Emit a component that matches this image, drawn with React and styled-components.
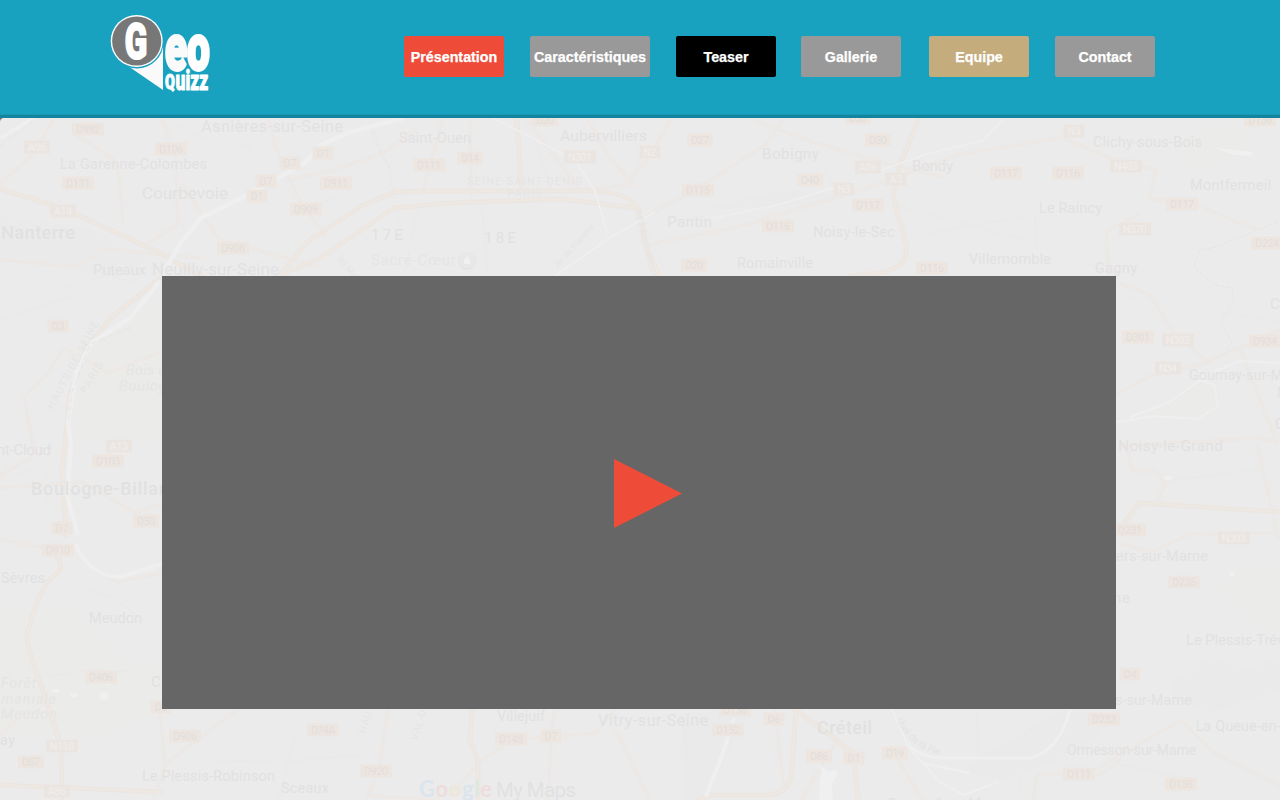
import React from 'react';
import styled, { createGlobalStyle } from 'styled-components';

const GlobalStyle = createGlobalStyle`
  * { box-sizing: border-box; }
  html, body, #root { height: 100%; }
  body {
    margin: 0;
    overflow: hidden;
    background: #ebebeb;
    font-family: "Liberation Sans", Arial, sans-serif;
  }
`;

const Page = styled.div`
  position: relative;
  display: flex;
  flex-direction: column;
  height: 100%;
  isolation: isolate;
`;

const MapBackdrop = styled.svg`
  position: absolute;
  inset: 0;
  z-index: -1;
  display: block;
  font-family: Roboto, sans-serif;
`;

const Header = styled.header`
  display: flex;
  flex: none;
  justify-content: space-between;
  height: 118px;
  padding: 0 125px 0 105px;
  background: #18a2c0;
  border-bottom: 3px solid #13849d;
  box-shadow: inset 0 -1px 0 #1799b6;
`;

const Logo = styled.svg`
  display: block;
  width: 112px;
  height: 100px;
`;

const LogoLetters = styled.g`
  fill: #fff;
  stroke: #fff;
  stroke-linejoin: round;
  font-family: Roboto, sans-serif;
  font-weight: 900;
`;

const Nav = styled.nav`
  display: flex;
  padding-top: 36px;
`;

const NavButton = styled.a`
  display: flex;
  align-items: center;
  justify-content: center;
  width: ${(p) => p.$width || 100}px;
  height: 41px;
  margin-left: ${(p) => p.$gap}px;
  padding-top: 1px;
  border-radius: 2px;
  background: ${(p) => p.$color};
  color: #fff;
  font-size: 14.3px;
  font-weight: bold;
  -webkit-text-stroke: 0.25px #fff;
  white-space: nowrap;
`;

const Main = styled.main`
  display: flex;
  padding: 158px 164px 0 162px;
`;

const Video = styled.section`
  display: flex;
  flex: 1;
  align-items: center;
  justify-content: center;
  height: 433px;
  padding: 1px 0 0 18px;
  background: #666;
`;

const PlayIcon = styled.svg`
  display: block;
  width: 68px;
  height: 69px;
`;

const links = [
  ['Présentation', '#ee4c39', 0],
  ['Caractéristiques', '#999', 26, 120],
  ['Teaser', '#000', 26],
  ['Gallerie', '#999', 25],
  ['Equipe', '#c4ac7d', 28],
  ['Contact', '#999', 26],
];

// text, x, baseline, width, size, weight
const places = [
  ['Asnières-sur-Seine', 201, 132, 142, 16.5],
  ['La Garenne-Colombes', 60, 169, 147, 14.5],
  ['Courbevoie', 142, 199, 86, 17],
  ['Nanterre', 1, 239, 74, 18.5, 500],
  ['Puteaux', 93, 275, 53, 15],
  ['Neuilly-sur-Seine', 152, 275, 127, 17],
  ['Saint-Ouen', 399, 143, 72, 14.5],
  ['Aubervilliers', 560, 141, 87, 15.5],
  ['Bobigny', 762, 159, 57, 15.5],
  ['Pantin', 667, 227, 45, 15.5],
  ['Noisy-le-Sec', 813, 237, 82, 14.5],
  ['Romainville', 737, 268, 76, 14.5],
  ['Bondy', 912, 171, 41, 15],
  ['Clichy-sous-Bois', 1093, 147, 109, 14.5],
  ['Le Raincy', 1039, 213, 63, 14.5],
  ['Montfermeil', 1190, 190, 81, 14.5],
  ['Villemomble', 969, 264, 82, 14.5],
  ['Gagny', 1095, 273, 42, 14.5],
  ['17E', 371, 240, 32, 15.5],
  ['18E', 484, 243, 32, 15.5],
  ['nt-Cloud', -3, 455, 54, 15],
  ['Boulogne-Billancourt', 31, 495, 184, 18, 500],
  ['Sèvres', 1, 583, 44, 14.5],
  ['Meudon', 89, 623, 53, 14.5],
  ['Clamart', 151, 687, 57, 15.5],
  ['ay', 0, 745, 15, 14.5],
  ['Le Plessis-Robinson', 142, 781, 133, 14.5],
  ['Sceaux', 281, 793, 48, 14.5],
  ['Villejuif', 497, 721, 48, 14.5],
  ['Vitry-sur-Seine', 598, 726, 110, 16],
  ['Créteil', 817, 734, 55, 18, 500],
  ['Ormesson-sur-Marne', 1067, 755, 129, 14],
  ['Bonneuil-sur-Marne', 888, 809, 120, 14.5],
  ['s-sur-Marne', 1115, 705, 77, 14.5],
  ['La Queue-en-Brie', 1196, 731, 110, 14],
  ['Le Plessis-Trévise', 1186, 645, 117, 14.5],
  ['ers-sur-Marne', 1116, 561, 92, 14.5],
  ['ne', 1113, 603, 17, 15],
  ['Noisy-le-Grand', 1118, 451, 105, 15.5],
  ['Gournay-sur-Marne', 1189, 380, 122, 14],
  ['Chelles', 1270, 309, 52, 15.5],
  ['N', 1277, 398, 10, 14],
  ['Ch', 1275, 429, 20, 14.5],
  ['My Maps', 496, 797, 80, 20.5],
];

const faintPlaces = [
  ['Sacré-Cœur', 371, 265, 85, 14.5, 0],
  ['SEINE-SAINT-DENIS', 467, 185, 115, 11, 0],
  ['PARIS', 507, 197, 35, 11, 0],
  ['Av de Flandre', 558, 268, 55, 9, -48],
  ['Bd Périphérique', 635, 210, 70, 9, 76],
  ['Bd Malesherbes', 337, 259, 65, 9, 50],
  ['HAUTS-DE-SEINE', 53, 410, 98, 10.5, -62],
  ['PARIS', 86, 394, 34, 10.5, -60],
  ['HAUTS', 365, 734, 36, 10.5, -72],
  ['VAL-DE', 417, 741, 38, 10.5, -72],
];

const pale = [
  ['Bois de', 126, 375, 48, 14.5],
  ['Boulogne', 119, 391, 64, 14.5],
  ['Forêt', 1, 688, 35, 14.5],
  ['maniale', 1, 704, 55, 14.5],
  ['Meudon', 1, 719, 56, 14.5],
];

// text, centre x, centre y
const dBadges = [
  ['D992', 88, 129], ['D106', 171, 149], ['D131', 78, 183], ['D7', 290, 163],
  ['D1', 323, 153], ['D7', 266, 181], ['D1', 257, 196], ['D911', 336, 183],
  ['D909', 306, 209], ['D908', 233, 248], ['D111', 429, 165], ['D14', 470, 158],
  ['D20', 545, 120], ['D27', 700, 140], ['D115', 698, 190], ['D40', 810, 180],
  ['D116', 778, 226], ['D20', 694, 265], ['D30', 878, 140], ['D30', 858, 118],
  ['D117', 1006, 173], ['D116', 1068, 173], ['D117', 868, 205],
  ['D117', 1182, 204], ['D116', 932, 268], ['D136', 1260, 120],
  ['D224', 1267, 243], ['D3', 58, 326], ['D103', 108, 461], ['D50', 146, 521],
  ['D7', 62, 528], ['D910', 58, 550], ['D406', 101, 677], ['D2', 161, 707],
  ['D57', 31, 762], ['D906', 185, 736], ['D74A', 323, 730],
  ['D920', 376, 771], ['D148', 511, 739], ['D7', 551, 736], ['D138', 735, 710],
  ['D152', 728, 730], ['D6', 774, 719], ['D86', 819, 756], ['D1', 854, 758],
  ['D19', 895, 753], ['D111', 1079, 774], ['D233', 1104, 719],
  ['D136', 1181, 784], ['D4', 1130, 674], ['D235', 1184, 582],
  ['D231', 1130, 530], ['D301', 1138, 337], ['D934', 1265, 341],
];

const nBadges = [
  ['A86', 37, 147], ['A14', 63, 211], ['N301', 580, 157], ['N2', 650, 152],
  ['N3', 844, 189], ['A86', 868, 167], ['A3', 896, 179], ['N3', 1074, 131],
  ['N403', 1126, 166], ['N370', 1135, 229], ['N302', 1178, 340],
  ['N34', 1168, 368], ['A13', 119, 446], ['N118', 62, 746], ['A86', 57, 791],
  ['N303', 1234, 538],
];

const minorRoads = [
  'M0 184 L33 154 L58 112', 'M72 132 L112 158 L119 175 L123 222',
  'M162 118 L176 160 L178 225 L145 245', 'M182 184 L204 218 L220 240 L320 267',
  'M268 118 L278 154 L300 201 L325 235', 'M290 180 L335 170 L385 152 L415 130',
  'M0 260 L76 267 L104 249 L200 258', 'M443 118 L422 193', 'M470 120 L471 200',
  'M526 118 L557 160 L580 190 L630 185', 'M587 118 L610 158 L633 184',
  'M671 118 L650 156 L628 181', 'M785 118 L765 145 L690 193 L647 216',
  'M648 245 L742 226 L864 189 L960 154 L1066 137',
  'M750 118 L800 138 L880 162 L942 177', 'M1066 139 L1110 158 L1155 170 L1150 199 L1200 206 L1230 219 L1255 229',
  'M1138 215 L1107 231 L1108 276', 'M160 352 L108 373 L82 357 L63 348 L49 372 L24 397 L35 455 L0 476',
  'M0 488 L82 482 L134 512 L162 505', 'M0 539 L57 551',
  'M162 573 L118 582 L92 568 L74 548', 'M28 710 L0 735',
  'M160 710 L165 765 L153 800', 'M238 709 L164 765', 'M388 710 L379 768 L368 796 L438 799',
  'M555 710 L552 728 L548 800', 'M614 710 L596 733 L513 740 L482 760 L450 795',
  'M616 730 L650 800', 'M775 710 L784 790', 'M835 744 L801 800',
  'M896 756 L922 800', 'M1116 282 L1150 295 L1172 331 L1208 363',
  'M1116 394 L1150 376 L1205 363 L1240 347 L1280 330',
  'M1240 348 L1277 443 L1262 438 L1120 446', 'M1257 444 L1279 540',
  'M1128 449 L1132 471 L1156 471 L1165 484 L1157 503',
  'M1116 542 L1150 552 L1192 534 L1280 533', 'M1100 767 L1181 720 L1215 754 L1280 786',
  'M1034 800 L1036 774 L1100 775 L1120 760',
];

const majorRoads = [
  'M0 189 L65 209 L160 253 L204 278', 'M280 275 L307 242 L360 207 L394 192 L430 191 L560 191 Q625 188 637 206 L647 250 L660 276',
  'M280 275 L320 258 L394 208 L450 203 L560 199 L634 208',
  'M919 118 L900 165 L893 195 L906 245 Q910 264 885 272 L850 276',
  'M517 118 L521 186', 'M1118 532 L1139 503 L1280 512',
  'M57 556 Q66 570 53 576 Q38 590 27 635 Q27 650 42 688 L61 746 L62 800',
  'M0 785 L162 792', 'M472 709 L470 740 L478 762 L478 800',
  'M796 710 L792 770 Q790 795 765 795 L712 795 L690 804', 'M796 710 L828 734 L854 754 L858 800',
  'M163 276 L112 317 L86 348 L70 395 L62 470 L66 536',
];

const whiteRoads = [
  ['M0 138 L34 118', 4], ['M404 118 L350 132 L321 145 L307 161 L280 177 L235 201 L201 218 L180 244 L162 275', 4.5],
  ['M160 281 L130 318 L90 344 L76 374 L68 423 L71 446 L67 495 L78 535', 4.5],
  ['M75 544 Q90 577 120 577 L162 564', 4],
  ['M493 118 L575 160 L595 191 L607 232', 1.5], ['M555 276 L608 239 L655 212', 2],
  ['M714 218 L778 205 L855 181', 1.5], ['M1003 120 L982 141 L930 153 L870 174', 1.5],
  ['M1116 422 L1155 416 L1198 419 L1218 406 L1214 385 L1200 380 L1170 402 L1130 417', 2],
  ['M1200 378 L1239 361 L1280 363', 2],
  ['M734 718 L722 756 L706 796', 4], ['M892 709 L908 746 L922 762 L940 782 L964 795 L998 782', 2],
  ['M908 746 Q925 758 942 758 L1030 758 Q1060 750 1070 710', 3],
  ['M922 763 L970 773', 2],
];

const streets = [
  'M40 169 L72 160 L105 164', 'M175 125 L231 149 L270 139', 'M230 118 L258 164',
  'M0 235 L55 207 L81 171', 'M125 204 L164 184 L184 228', 'M320 205 L365 183 L390 157',
  'M371 121 L390 172 L401 235', 'M419 202 L404 278', 'M481 200 L488 276',
  'M530 130 L553 193', 'M568 272 L630 238 L662 207', 'M636 210 L667 276',
  'M750 118 L823 164 L841 205', 'M877 200 L1032 242 L1118 276', 'M930 233 L1035 215 L1037 250',
  'M60 290 L109 275 L138 284', 'M0 319 L77 295', 'M0 479 L47 465 L47 510',
  'M66 580 L111 597 L147 622', 'M50 676 L90 670 L137 672', 'M215 760 L280 762 L360 755',
  'M295 736 L279 800', 'M1116 294 L1280 322', 'M1160 482 L1260 469',
  'M1210 715 L1250 680 L1280 675', 'M1070 774 L1118 764 L1180 777',
  'M684 720 L690 800', 'M977 710 L979 800', 'M1049 707 L1020 742 L1019 800',
];

function RoadSet({ roads, color, width }) {
  return roads.map((d) => (
    <path key={d} d={d} fill="none" stroke={color} strokeWidth={width} strokeLinejoin="round" strokeLinecap="round" />
  ));
}

function Badge({ text, x, y, fill, ink }) {
  const width = text.length < 3 ? 21 : text.length === 3 ? 26 : 32;
  return (
    <g>
      <rect x={x - width / 2} y={y - 6.5} width={width} height={13} rx="1.5" fill={fill} />
      <text x={x} y={y + 3.7} fill={ink} fontSize="10.5" textAnchor="middle" textLength={width - 8}>{text}</text>
    </g>
  );
}

function CityMap() {
  return (
    <MapBackdrop width="1280" height="800" viewBox="0 0 1280 800" aria-hidden="true">
      <rect width="1280" height="800" fill="#ebebeb" />
      <g fill="#ebebe9">
        <path d="M94 340 L162 300 L162 442 L84 440 L76 405 Z" />
        <path d="M0 610 L75 610 L130 665 L162 668 L162 705 L100 740 L65 735 L0 735 Z" />
        <path d="M1180 140 L1210 128 L1240 124 L1254 138 L1255 155 L1223 160 L1200 174 L1180 154 Z" />
        <path d="M1220 590 L1230 572 L1280 564 L1280 633 L1243 614 Z" />
        <path d="M1155 413 L1188 388 L1212 382 L1219 405 L1200 417 Z" />
      </g>
      <g fill="#eaeaea">
        <path d="M0 215 L90 228 L150 260 L110 276 L0 255 Z" />
        <path d="M700 210 L780 190 L858 193 L800 205 Z" />
        <path d="M1170 684 L1210 657 L1250 670 L1280 655 L1280 690 L1210 713 L1170 695 Z" />
        <path d="M680 710 L750 710 L705 800 L685 800 Z" />
        <path d="M1060 710 L1116 710 L1100 735 L1060 760 L1000 780 L960 770 Z" />
      </g>
      <RoadSet roads={streets} color="#e9e9e9" width={1} />
      <RoadSet roads={minorRoads} color="#ece8e5" width={3.5} />
      <RoadSet roads={majorRoads} color="#ece6e2" width={5} />
      <RoadSet roads={majorRoads} color="#eee8e2" width={2} />
      {whiteRoads.map(([d, width]) => (
        <path key={d} d={d} fill="none" stroke="#efefef" strokeWidth={width} strokeLinejoin="round" />
      ))}
      <path d="M0 146 L20 131 L34 119 M372 132 L382 156 L394 173 M130 328 L90 344 L72 392 L68 423" fill="none" stroke="#e4e5e5" strokeDasharray="6 3" />
      <path d="M1278 222 L1246 235 L1216 247 L1200 250 L1194 267 L1203 275 M1196 270 L1215 285 L1232 288 L1234 299 L1221 323 L1232 342 L1223 356" fill="none" stroke="#e5e5e6" strokeDasharray="4 2" />
      <g fill="#f0f0f0">
        <circle cx="104" cy="696" r="4" />
        <ellipse cx="74" cy="695" rx="4" ry="2" />
        <ellipse cx="56" cy="691" rx="4" ry="2" />
        <path d="M818 765 L828 771 L838 770 L836 777 L832 784 L833 800 L819 800 L820 780 L822 772 Z" />
        <path d="M1212 147 L1225 149 L1253 152 L1252 156 L1234 155 Z" />
        <ellipse cx="1168" cy="478" rx="4" ry="2" />
        <ellipse cx="1232" cy="574" rx="3" ry="2" />
      </g>
      {dBadges.map(([text, x, y]) => (
        <Badge key={`${text}-${x}`} text={text} x={x} y={y} fill="#ede6e0" ink="#e1dedb" />
      ))}
      {nBadges.map(([text, x, y]) => (
        <Badge key={`${text}-${x}`} text={text} x={x} y={y} fill="#ebe5e1" ink="#f0eeed" />
      ))}
      <g fill="#e2e1e1">
        {places.map(([text, x, y, width, size, weight]) => (
          <text key={`${text}-${x}`} x={x} y={y} fontSize={size} fontWeight={weight || 400} textLength={width}>{text}</text>
        ))}
      </g>
      <g fill="#e5e5e5">
        {faintPlaces.map(([text, x, y, width, size, angle]) => (
          <text key={`${text}-${x}`} transform={`translate(${x} ${y}) rotate(${angle})`} fontSize={size} textLength={width}>{text}</text>
        ))}
      </g>
      <g fill="#e5e5e3" fontStyle="italic">
        {pale.map(([text, x, y, width, size]) => (
          <text key={`${text}-${y}`} x={x} y={y} fontSize={size} textLength={width}>{text}</text>
        ))}
      </g>
      <path id="quay" d="M897 719 Q908 748 946 757" fill="none" />
      <text fill="#e2e3e3" fontSize="9.5"><textPath href="#quay">Quai de la Pie</textPath></text>
      <circle cx="467" cy="261" r="9" fill="#e2e2e2" />
      <circle cx="467" cy="260" r="8.5" fill="#e8e8e8" />
      <path d="M464 264 V260 L467 256 L470 260 V264 Z" fill="#f0f0f0" />
      <text x="419" y="797" fontFamily="Lato, sans-serif" fontSize="22" fontWeight="700" textLength="73">
        <tspan fill="#dce4ee">G</tspan><tspan fill="#eddddc">o</tspan><tspan fill="#eee7d9">o</tspan><tspan fill="#dce4ee">g</tspan><tspan fill="#dce9df">l</tspan><tspan fill="#eddddc">e</tspan>
      </text>
      <path d="M0 118 H3 Q0 119 0 122 Z" fill="#777" />
    </MapBackdrop>
  );
}

function GeoLogo() {
  return (
    <Logo viewBox="105 0 112 100" role="img" aria-label="Geo Quizz">
      <path d="M128 66 L163 90 V45 Z" fill="#fafafa" />
      <circle cx="137" cy="42" r="26.5" fill="#18a2c0" />
      <circle cx="136.7" cy="41" r="26" fill="#fff" />
      <circle cx="136.7" cy="41" r="24.6" fill="#777" />
      <LogoLetters>
        <text transform="translate(124.8 58.5) scale(.66 1)" fontSize="50" strokeWidth="2">G</text>
        <text transform="translate(164.9 70.4) scale(.635 1)" fontSize="64" strokeWidth="3">
          <tspan fill="#fafafa" stroke="#fafafa">e</tspan><tspan>o</tspan>
        </text>
        <text transform="translate(165 89.2) scale(.68 1)" fontSize="21" strokeWidth="1">Q</text>
        <text transform="translate(175.6 89.5) scale(.65 1)" fontSize="27" strokeWidth="1">uizz</text>
      </LogoLetters>
    </Logo>
  );
}

export default function App() {
  return (
    <>
      <GlobalStyle />
      <Page>
        <CityMap />
        <Header>
          <GeoLogo />
          <Nav>
            {links.map(([label, color, gap, width]) => (
              <NavButton key={label} $color={color} $gap={gap} $width={width}>{label}</NavButton>
            ))}
          </Nav>
        </Header>
        <Main>
          <Video aria-label="Teaser">
            <PlayIcon viewBox="0 0 68 69"><path d="M0 0 L68 34.5 L0 69 Z" fill="#ee4c39" /></PlayIcon>
          </Video>
        </Main>
      </Page>
    </>
  );
}
